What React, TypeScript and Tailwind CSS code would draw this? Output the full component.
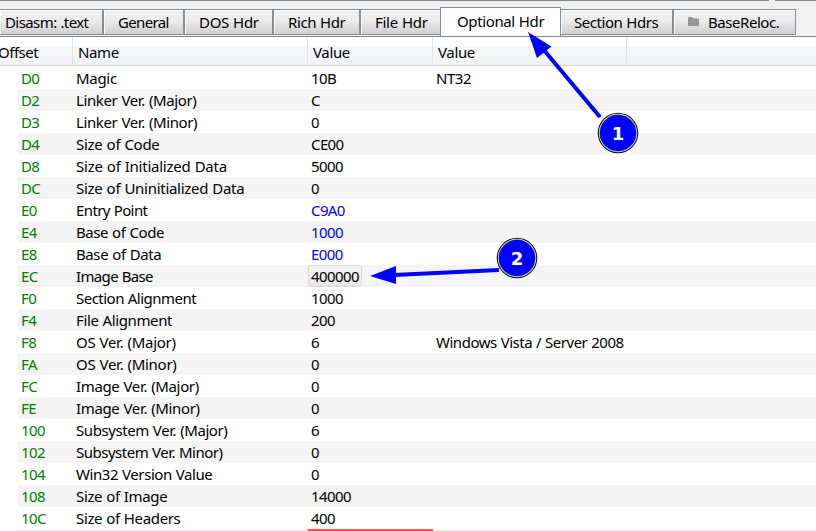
type Row = { offset: string; name: string; value: string; note?: string; link?: boolean; boxed?: boolean; track?: string };

const rows: Row[] = [
  { offset: 'D0', name: 'Magic', value: '10B', note: 'NT32', track: 'tracking-[-0.3px]' },
  { offset: 'D2', name: 'Linker Ver. (Major)', value: 'C', track: 'tracking-[-0.38px]' },
  { offset: 'D3', name: 'Linker Ver. (Minor)', value: '0', track: 'tracking-[-0.38px]' },
  { offset: 'D4', name: 'Size of Code', value: 'CE00', track: 'tracking-[-0.28px]' },
  { offset: 'D8', name: 'Size of Initialized Data', value: '5000', track: 'tracking-[-0.24px]' },
  { offset: 'DC', name: 'Size of Uninitialized Data', value: '0', track: 'tracking-[-0.28px]' },
  { offset: 'E0', name: 'Entry Point', value: 'C9A0', link: true, track: 'tracking-[-0.6px]' },
  { offset: 'E4', name: 'Base of Code', value: '1000', link: true, track: 'tracking-[-0.42px]' },
  { offset: 'E8', name: 'Base of Data', value: 'E000', link: true, track: 'tracking-[-0.4px]' },
  { offset: 'EC', name: 'Image Base', value: '400000', boxed: true, track: 'tracking-[-0.65px]' },
  { offset: 'F0', name: 'Section Alignment', value: '1000', track: 'tracking-[-0.52px]' },
  { offset: 'F4', name: 'File Alignment', value: '200', track: 'tracking-[-0.38px]' },
  { offset: 'F8', name: 'OS Ver. (Major)', value: '6', note: 'Windows Vista / Server 2008', track: 'tracking-[-0.28px]' },
  { offset: 'FA', name: 'OS Ver. (Minor)', value: '0', track: 'tracking-[-0.28px]' },
  { offset: 'FC', name: 'Image Ver. (Major)', value: '0', track: 'tracking-[-0.35px]' },
  { offset: 'FE', name: 'Image Ver. (Minor)', value: '0', track: 'tracking-[-0.35px]' },
  { offset: '100', name: 'Subsystem Ver. (Major)', value: '6', track: 'tracking-[-0.42px]' },
  { offset: '102', name: 'Subsystem Ver. Minor)', value: '0', track: 'tracking-[-0.5px]' },
  { offset: '104', name: 'Win32 Version Value', value: '0', track: 'tracking-[-0.43px]' },
  { offset: '108', name: 'Size of Image', value: '14000', track: 'tracking-[-0.35px]' },
  { offset: '10C', name: 'Size of Headers', value: '400', track: 'tracking-[-0.35px]' },
];

const tabs = [
  { label: 'Disasm: .text', size: 'w-[104px] pl-[5px] tracking-[-0.58px]' },
  { label: 'General', size: 'w-[81px] pl-[14px] tracking-[-0.65px]' },
  { label: 'DOS Hdr', size: 'w-[89px] pl-[14px] tracking-[-0.3px]' },
  { label: 'Rich Hdr', size: 'w-[87px] pl-[14px] tracking-[-0.4px]' },
  { label: 'File Hdr', size: 'w-[79px] pl-[14px] tracking-[-0.3px]', last: true },
  { label: 'Optional Hdr', size: 'w-[121px] pl-[16px] tracking-[-0.38px]', active: true },
  { label: 'Section Hdrs', size: 'w-[113px] pl-[13px] tracking-[-0.45px]' },
  { label: 'BaseReloc.', size: 'w-[122px] pl-[14px] tracking-[-0.45px]', folder: true, last: true },
];

type TabProps = { label: string; size: string; active?: boolean; folder?: boolean; last?: boolean };

function Tab({ label, size, active, folder, last }: TabProps) {
  const edge = last && !folder ? '' : last ? 'border-r' : 'border-r-2';
  const look = active
    ? 'h-[29px] border-x border-t border-[#898c95] bg-white pb-[2px]'
    : `mb-[1px] h-[26px] border-y border-[#898c95] bg-linear-to-b from-[#f2f2f2] from-0% via-[#ebebeb] via-45% to-[#cfcfcf] pb-px shadow-[inset_1px_1px_0_#fbfbfb] ${edge}`;
  return (
    <div className={`flex shrink-0 items-center whitespace-nowrap ${size} ${look}`}>
      {folder && (
        <svg className="mr-[9px] -mt-px shrink-0" width="11" height="9" viewBox="0 0 11 9">
          <path d="M1 0h3.2l1.300 1.500h4.500q1 0 1 1v5.500q0 1-1 1h-9q-1 0-1-1v-7q0-1 1-1z" fill="#969696" />
        </svg>
      )}
      {label}
    </div>
  );
}

function Header() {
  const cell = 'flex items-center border-r border-[#e2e3e5] pt-px';
  return (
    <div className="flex h-[29px] border-b border-[#d5d5d5] bg-[linear-gradient(to_bottom,#fff_0,#fff_9px,#f7f8fa_9px,#f1f2f4_100%)] tracking-[-0.35px]">
      <div className={`${cell} w-[73px]`}><span className="-ml-[2px] tracking-[-0.5px]">Offset</span></div>
      <div className={`${cell} w-[235px] pl-[5px]`}>Name</div>
      <div className={`${cell} w-[125px] pl-[5px]`}>Value</div>
      <div className={`${cell} w-[194px] pl-[5px]`}>Value</div>
    </div>
  );
}

export default function App() {
  return (
    <div className="relative h-[531px] w-[816px] overflow-hidden bg-white font-['Noto_Sans','Open_Sans',sans-serif] text-[15px] leading-[22px] text-black [word-spacing:0.5px]">
      <div className="flex h-[36px] flex-col bg-[#f0f0f0]">
        <div className="flex h-px shrink-0 gap-[6px]">
          <div className="w-[769px] bg-[#828790]" />
          <div className="flex-1 bg-[#828790]" />
        </div>
        <div className="flex flex-1 items-end">
          {tabs.map((t) => <Tab key={t.label} {...t} />)}
        </div>
      </div>
      <div className="h-px bg-[#828790]" />
      <Header />
      <div className="ml-[18px] pt-[1px]">
        {rows.map((r) => (
          <div key={r.offset} className="flex h-[22px] whitespace-nowrap tracking-[-0.6px] leading-[22px] even:bg-[#f4f4f4]">
            <div className="w-[55px] pl-[3px] text-[#008000]">{r.offset}</div>
            <div className={`w-[235px] pl-[3px] ${r.track}`}>{r.name}</div>
            <div className={`w-[125px] ${r.link ? 'text-[#0000ff]' : ''}`}>
              {r.boxed ? (
                <div className="h-[22px] w-[54px] rounded-[3px] border border-[#d9d9d9] bg-linear-to-b from-[#f5f5f5] to-[#e7e7e7] pl-[2px] leading-[20px]">{r.value}</div>
              ) : (
                <div className="pl-[3px]">{r.value}</div>
              )}
            </div>
            <div className="pl-[3px] tracking-[-0.48px]">{r.note}</div>
          </div>
        ))}
        <div className="flex h-[2px] bg-[#f4f4f4] pl-[290px]">
          <div className="w-[125px] bg-[#f95353]" />
        </div>
      </div>
      <svg className="absolute inset-0" width="816" height="531" viewBox="0 0 816 531" fontFamily="DejaVu Sans, sans-serif" fontWeight="700" fontSize="18" textAnchor="middle">
        <g stroke="#0000ff" strokeWidth="4">
          <path d="M600 117L543 49" />
          <path d="M499 270L394 275" />
        </g>
        <path d="M528 32L551.500 46.500L537 58Z" fill="#0000ff" />
        <path d="M370 276L396 266V284Z" fill="#0000ff" />
        {[{ n: 1, x: 618, y: 133 }, { n: 2, x: 517, y: 258 }].map((m) => (
          <g key={m.n}>
            <circle cx={m.x} cy={m.y} r="20.3" fill="#111" />
            <circle cx={m.x} cy={m.y} r="19.2" fill="#fff" />
            <circle cx={m.x} cy={m.y} r="18.200" fill="#0000ff" stroke="#222" strokeWidth="0.500" />
            <text x={m.x} y={m.y + 7} fill="#fff">{m.n}</text>
          </g>
        ))}
      </svg>
    </div>
  );
}
